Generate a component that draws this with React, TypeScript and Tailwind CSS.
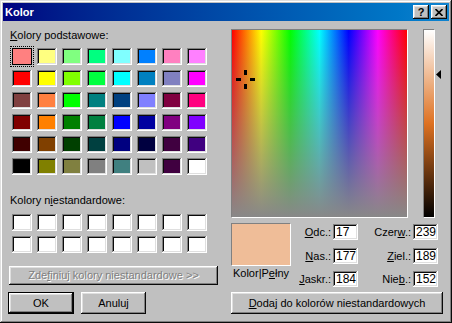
const basicColors = [
  "#ff8080", "#ffff80", "#80ff80", "#00ff80", "#80ffff", "#0080ff", "#ff80c0", "#ff80ff",
  "#ff0000", "#ffff00", "#80ff00", "#00ff40", "#00ffff", "#0080c0", "#8080c0", "#ff00ff",
  "#804040", "#ff8040", "#00ff00", "#008080", "#004080", "#8080ff", "#800040", "#ff0080",
  "#800000", "#ff8000", "#008000", "#008040", "#0000ff", "#0000a0", "#800080", "#8000ff",
  "#400000", "#804000", "#004000", "#004040", "#000080", "#000040", "#400040", "#400080",
  "#000000", "#808000", "#808040", "#808080", "#408080", "#c0c0c0", "#400040", "#ffffff",
];

const raised =
  "shadow-[inset_-1px_-1px_#0a0a0a,inset_1px_1px_#fff,inset_-2px_-2px_#808080,inset_2px_2px_#dfdfdf]";
const sunken =
  "shadow-[inset_-1px_-1px_#fff,inset_1px_1px_#808080,inset_-2px_-2px_#dfdfdf,inset_2px_2px_#0a0a0a]";

const Field = ({ value }: { value: string }) => (
  <div className={`h-[16px] w-[25px] bg-white pl-[3px] text-[12px] leading-[16px] ${sunken}`}>
    {value}
  </div>
);

const Label = ({ children }: { children: React.ReactNode }) => (
  <div className="h-[16px] text-right leading-[16px]">{children}</div>
);

export default function App() {
  return (
    <div
      className={`w-[452px] h-[323px] bg-[#c0c0c0] p-[3px] font-['Liberation_Sans',Arial,sans-serif] text-[11px] text-black shadow-[inset_-1px_-1px_#0a0a0a,inset_1px_1px_#dfdfdf,inset_-2px_-2px_#808080,inset_2px_2px_#fff]`}
    >
      {/* title bar */}
      <div className="h-[18px] flex items-center bg-linear-to-r from-[#000080] to-[#1084d0] pl-[2px] pr-[2px]">
        <span className="font-bold text-white leading-[18px]">Kolor</span>
        <div className="ml-auto flex gap-[2px]">
          <div className={`w-[16px] h-[14px] bg-[#c0c0c0] flex items-center justify-center font-bold text-[11px] leading-none ${raised}`}>
            ?
          </div>
          <div className={`w-[16px] h-[14px] bg-[#c0c0c0] flex items-center justify-center ${raised}`}>
            <svg width="8" height="7" viewBox="0 0 8 7">
              <path d="M0.5 0 L7.5 7 M7.5 0 L0.5 7" stroke="#000" strokeWidth="1.6" />
            </svg>
          </div>
        </div>
      </div>

      <div className="flex">
        {/* left column */}
        <div className="w-[228px] flex flex-col pt-[8px]">
          <div className="pl-[7px] leading-[13px]">
            <u>K</u>olory podstawowe:
          </div>
          <div className="mt-[6px] ml-[9px] grid grid-cols-[repeat(8,20px)] auto-rows-[17px] gap-[5px]">
            {basicColors.map((c, i) =>
              i === 0 ? (
                <div
                  key={i}
                  className="border border-black outline outline-1 outline-dotted outline-black outline-offset-[1px]"
                  style={{ background: c }}
                />
              ) : (
                <div key={i} className={sunken} style={{ background: c }} />
              )
            )}
          </div>

          <div className="mt-[19px] pl-[7px] leading-[13px]">
            Kolory n<u>i</u>estandardowe:
          </div>
          <div className="mt-[7px] ml-[9px] grid grid-cols-[repeat(8,20px)] auto-rows-[17px] gap-[5px]">
            {Array.from({ length: 16 }).map((_, i) => (
              <div key={i} className={`bg-white ${sunken}`} />
            ))}
          </div>

          <div
            className={`mt-[13px] ml-[6px] w-[209px] h-[19px] flex items-center justify-center text-[#808080] [text-shadow:1px_1px_0_#fff] ${raised}`}
          >
            <span>
              Zde<u>f</u>iniuj kolory niestandardowe &gt;&gt;
            </span>
          </div>

          <div className="mt-[7px] ml-[5px] flex gap-[7px]">
            <div className="w-[66px] h-[22px] border border-black">
              <div className={`w-full h-full flex items-center justify-center ${raised}`}>OK</div>
            </div>
            <div className={`w-[65px] h-[22px] flex items-center justify-center ${raised}`}>Anuluj</div>
          </div>
        </div>

        {/* right column */}
        <div className="flex-1 flex flex-col pt-[8px]">
          <div className="flex">
            <div
              className={`relative w-[177px] h-[189px] border border-t-[#808080] border-l-[#808080] border-b-white border-r-white bg-[linear-gradient(to_bottom,rgba(128,128,128,0),#888888),linear-gradient(to_right,#f00,#ff0,#0f0,#0ff,#00f,#f0f,#f00)]`}
            >
              <svg className="absolute left-[4px] top-[40px]" width="19" height="19" viewBox="0 0 19 19">
                <rect x="8" y="0" width="3" height="5" fill="#000" />
                <rect x="8" y="14" width="3" height="5" fill="#000" />
                <rect x="0" y="8" width="5" height="3" fill="#000" />
                <rect x="14" y="8" width="5" height="3" fill="#000" />
              </svg>
            </div>
            <div className="relative ml-[15px] w-[12px] h-[189px] border border-t-[#808080] border-l-[#808080] border-b-white border-r-white bg-[linear-gradient(to_bottom,#fff,#de7121,#000)]">
              <svg className="absolute left-[12px] top-[40px]" width="6" height="10" viewBox="0 0 6 10">
                <polygon points="0,4.5 5,0 5,9" fill="#000" />
              </svg>
            </div>
          </div>

          <div className="mt-[5px] flex">
            <div className="w-[60px] flex flex-col items-center">
              <div className="w-[60px] h-[43px] bg-[#efbd98] border border-t-[#808080] border-l-[#808080] border-b-white border-r-white" />
              <div className="mt-[1px] leading-[13px] whitespace-nowrap">
                Kolor|P<u>e</u>łny
              </div>
            </div>
            <div className="mt-[1px] grid grid-cols-[40px_25px_51px_25px] auto-rows-[16px] gap-x-[2px] gap-y-[7.5px]">
              <Label>
                <u>O</u>dc.:
              </Label>
              <Field value="17" />
              <Label>
                Czer<u>w</u>.:
              </Label>
              <Field value="239" />
              <Label>
                <u>N</u>as.:
              </Label>
              <Field value="177" />
              <Label>
                <u>Z</u>iel.:
              </Label>
              <Field value="189" />
              <Label>
                <u>J</u>askr.:
              </Label>
              <Field value="184" />
              <Label>
                Nie<u>b</u>.:
              </Label>
              <Field value="152" />
            </div>
          </div>

          <div className={`mt-[5px] w-[212px] h-[22px] flex items-center justify-center ${raised}`}>
            <span>
              <u>D</u>odaj do kolorów niestandardowych
            </span>
          </div>
        </div>
      </div>
    </div>
  );
}
